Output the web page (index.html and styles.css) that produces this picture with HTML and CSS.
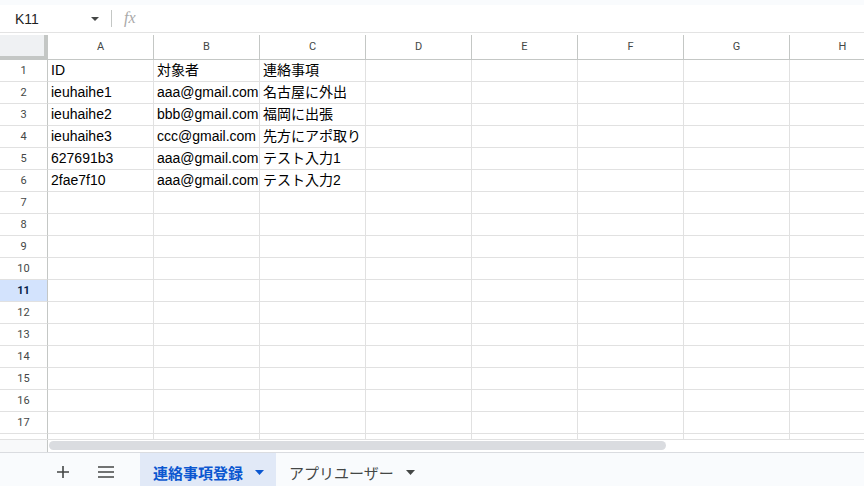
FILE: index.html
```html
<!DOCTYPE html>
<html lang="ja">
<head>
<meta charset="utf-8">
<title>連絡事項登録</title>
<link rel="stylesheet" href="styles.css">
</head>
<body>
<div class="app">
  <div class="top-strip"></div>
  <div class="formula-bar">
    <div class="namebox">
      <span class="namebox-text">K11</span>
      <svg class="tri" width="8" height="4" viewBox="0 0 8 4"><path d="M0 0h8L4 4z" fill="#444746"/></svg>
    </div>
    <div class="fsep"></div>
    <span class="fx">fx</span>
  </div>
  <div class="sheet">
    <div class="grid">
      <div class="corner"></div>
      <div class="ch">A</div><div class="ch">B</div><div class="ch">C</div><div class="ch">D</div><div class="ch">E</div><div class="ch">F</div><div class="ch">G</div><div class="ch">H</div>

      <div class="rh">1</div><div class="c">ID</div><div class="c">対象者</div><div class="c">連絡事項</div><div class="c"></div><div class="c"></div><div class="c"></div><div class="c"></div><div class="c"></div>
      <div class="rh">2</div><div class="c">ieuhaihe1</div><div class="c">aaa@gmail.com</div><div class="c">名古屋に外出</div><div class="c"></div><div class="c"></div><div class="c"></div><div class="c"></div><div class="c"></div>
      <div class="rh">3</div><div class="c">ieuhaihe2</div><div class="c">bbb@gmail.com</div><div class="c">福岡に出張</div><div class="c"></div><div class="c"></div><div class="c"></div><div class="c"></div><div class="c"></div>
      <div class="rh">4</div><div class="c">ieuhaihe3</div><div class="c">ccc@gmail.com</div><div class="c">先方にアポ取り</div><div class="c"></div><div class="c"></div><div class="c"></div><div class="c"></div><div class="c"></div>
      <div class="rh">5</div><div class="c">627691b3</div><div class="c">aaa@gmail.com</div><div class="c">テスト入力1</div><div class="c"></div><div class="c"></div><div class="c"></div><div class="c"></div><div class="c"></div>
      <div class="rh">6</div><div class="c">2fae7f10</div><div class="c">aaa@gmail.com</div><div class="c">テスト入力2</div><div class="c"></div><div class="c"></div><div class="c"></div><div class="c"></div><div class="c"></div>
      <div class="rh">7</div><div class="c"></div><div class="c"></div><div class="c"></div><div class="c"></div><div class="c"></div><div class="c"></div><div class="c"></div><div class="c"></div>
      <div class="rh">8</div><div class="c"></div><div class="c"></div><div class="c"></div><div class="c"></div><div class="c"></div><div class="c"></div><div class="c"></div><div class="c"></div>
      <div class="rh">9</div><div class="c"></div><div class="c"></div><div class="c"></div><div class="c"></div><div class="c"></div><div class="c"></div><div class="c"></div><div class="c"></div>
      <div class="rh">10</div><div class="c"></div><div class="c"></div><div class="c"></div><div class="c"></div><div class="c"></div><div class="c"></div><div class="c"></div><div class="c"></div>
      <div class="rh rh-active">11</div><div class="c"></div><div class="c"></div><div class="c"></div><div class="c"></div><div class="c"></div><div class="c"></div><div class="c"></div><div class="c"></div>
      <div class="rh">12</div><div class="c"></div><div class="c"></div><div class="c"></div><div class="c"></div><div class="c"></div><div class="c"></div><div class="c"></div><div class="c"></div>
      <div class="rh">13</div><div class="c"></div><div class="c"></div><div class="c"></div><div class="c"></div><div class="c"></div><div class="c"></div><div class="c"></div><div class="c"></div>
      <div class="rh">14</div><div class="c"></div><div class="c"></div><div class="c"></div><div class="c"></div><div class="c"></div><div class="c"></div><div class="c"></div><div class="c"></div>
      <div class="rh">15</div><div class="c"></div><div class="c"></div><div class="c"></div><div class="c"></div><div class="c"></div><div class="c"></div><div class="c"></div><div class="c"></div>
      <div class="rh">16</div><div class="c"></div><div class="c"></div><div class="c"></div><div class="c"></div><div class="c"></div><div class="c"></div><div class="c"></div><div class="c"></div>
      <div class="rh">17</div><div class="c"></div><div class="c"></div><div class="c"></div><div class="c"></div><div class="c"></div><div class="c"></div><div class="c"></div><div class="c"></div>
      <div class="rh"></div><div class="c"></div><div class="c"></div><div class="c"></div><div class="c"></div><div class="c"></div><div class="c"></div><div class="c"></div><div class="c"></div>
    </div>
  </div>
  <div class="hscroll">
    <div class="hs-corner"></div>
    <div class="hs-track"><div class="hs-thumb"></div></div>
  </div>
  <div class="tabbar">
    <button class="icon-btn add-btn" aria-label="シートを追加">
      <svg width="14" height="14" viewBox="0 0 14 14"><path d="M7 1v12M1 7h12" stroke="#444746" stroke-width="1.6" fill="none"/></svg>
    </button>
    <button class="icon-btn menu-btn" aria-label="すべてのシート">
      <svg width="18" height="12" viewBox="0 0 18 12"><path d="M1 1h16M1 6h16M1 11h16" stroke="#444746" stroke-width="1.6" fill="none"/></svg>
    </button>
    <div class="tab tab-active">
      <span class="tab-label">連絡事項登録</span>
      <svg class="tab-tri" width="9" height="5" viewBox="0 0 9 5"><path d="M0 0h9L4.5 5z" fill="#0b57d0"/></svg>
    </div>
    <div class="tab">
      <span class="tab-label">アプリユーザー</span>
      <svg class="tab-tri" width="9" height="5" viewBox="0 0 9 5"><path d="M0 0h9L4.5 5z" fill="#444746"/></svg>
    </div>
  </div>
</div>
</body>
</html>
```
FILE: styles.css
```css
* { box-sizing: border-box; }
html, body {
  margin: 0;
  padding: 0;
  width: 864px;
  height: 486px;
  overflow: hidden;
  background: #ffffff;
}
.app {
  width: 864px;
  height: 486px;
  overflow: hidden;
  display: flex;
  flex-direction: column;
  font-family: "Liberation Sans", "Noto Sans CJK JP", sans-serif;
}
.top-strip {
  height: 5px;
  flex: none;
  background: #f9fbfd;
}
.formula-bar {
  height: 28px;
  flex: none;
  display: flex;
  align-items: center;
  border-bottom: 1px solid #e3e3e3;
  margin-bottom: 2px;
  background: #ffffff;
}
.namebox {
  width: 104px;
  display: flex;
  align-items: center;
  justify-content: space-between;
  padding: 0 5px 0 15px;
}
.namebox-text {
  font-size: 14px;
  color: #1f1f1f;
}
.tri { display: block; }
.fsep {
  width: 1px;
  height: 17px;
  margin-left: 7px;
  background: #c4c7c5;
}
.fx {
  margin-left: 12px;
  font-family: "Liberation Serif", "DejaVu Serif", serif;
  font-style: italic;
  font-size: 16px;
  color: #a9a9a9;
  line-height: 1;
  margin-top: -2px;
}
.sheet {
  height: 404px;
  flex: none;
  overflow: hidden;
}
.grid {
  display: grid;
  grid-template-columns: 48px repeat(8, 106px);
  grid-template-rows: 25px repeat(18, 22px);
  width: 896px;
}
.corner {
  background: #eff1f3;
  border-right: 4px solid #c4c7c5;
  border-bottom: 4px solid #c4c7c5;
}
.ch {
  border-right: 1px solid #c4c7c5;
  border-bottom: 1px solid #c4c7c5;
  font-family: "Roboto", "Liberation Sans", sans-serif;
  font-size: 11px;
  color: #444746;
  display: flex;
  align-items: center;
  justify-content: center;
  padding-bottom: 1px;
}
.rh {
  border-right: 1px solid #c4c7c5;
  border-bottom: 1px solid #e1e1e1;
  font-family: "Roboto", "Liberation Sans", sans-serif;
  font-size: 11px;
  color: #444746;
  display: flex;
  align-items: center;
  justify-content: center;
}
.rh-active {
  background: #d3e3fd;
  color: #041e49;
  font-weight: bold;
}
.c {
  border-right: 1px solid #e1e1e1;
  border-bottom: 1px solid #e1e1e1;
  font-size: 14px;
  line-height: 21px;
  color: #000000;
  padding: 0 3px;
  white-space: nowrap;
  overflow: hidden;
}
.hscroll {
  height: 14px;
  flex: none;
  display: flex;
  border-top: 1px solid #e1e1e1;
  border-bottom: 1px solid #dadce0;
}
.hs-corner {
  width: 48px;
  background: #f8f9fa;
  border-right: 1px solid #c4c7c5;
}
.hs-track {
  flex: 1;
  padding: 1px 0 0 1px;
}
.hs-thumb {
  width: 617px;
  height: 9px;
  border-radius: 5px;
  background: #dadce0;
}
.tabbar {
  height: 38px;
  flex: none;
  display: flex;
  align-items: stretch;
  background: #f9fbfd;
  padding-left: 47px;
}
.icon-btn {
  width: 32px;
  border: 0;
  padding: 0;
  background: transparent;
  display: flex;
  align-items: center;
  justify-content: center;
}
.icon-btn svg { display: block; }
.menu-btn { margin-left: 11px; }
.tab {
  display: flex;
  align-items: center;
  padding: 0 12px 0 13px;
  font-family: "Roboto", "Noto Sans CJK JP", sans-serif;
  font-size: 15px;
  color: #444746;
}
.tab-active {
  margin-left: 18px;
  background: #e1e9f7;
  color: #0b57d0;
  font-weight: bold;
}
.tab-label { white-space: nowrap; }
.tab-tri {
  display: block;
  margin-left: 12px;
}
```
